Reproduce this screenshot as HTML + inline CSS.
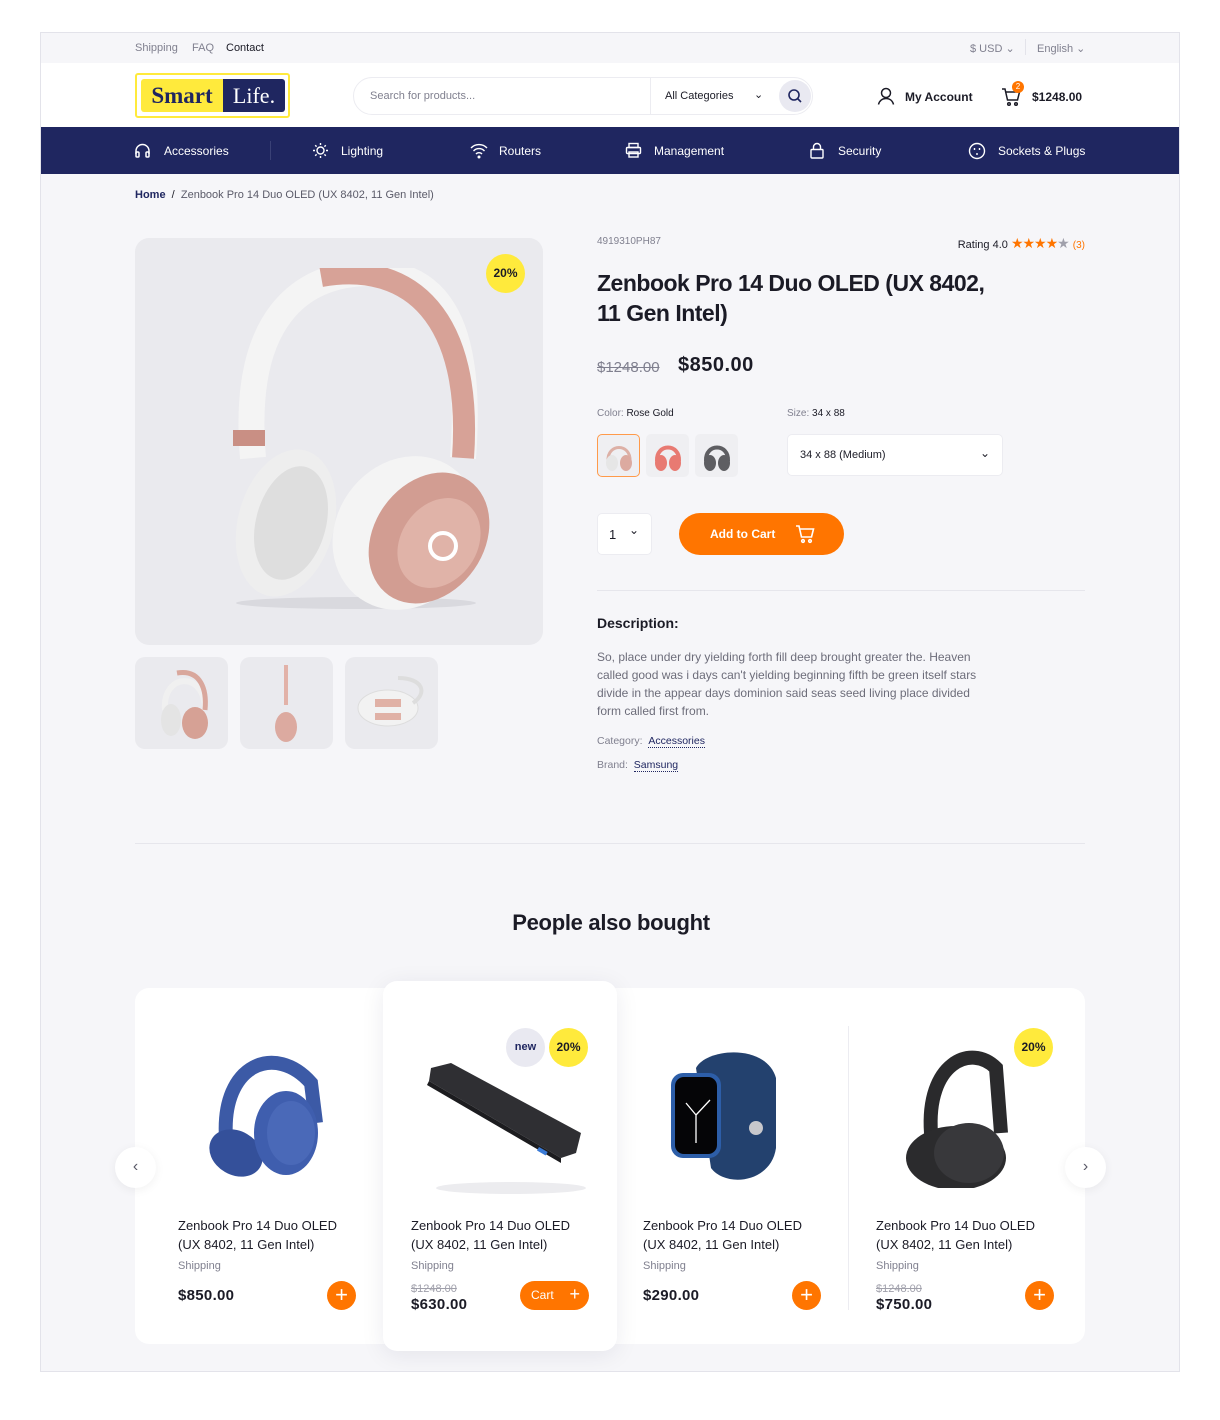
<!DOCTYPE html>
<html><head><meta charset="utf-8"><style>
*{box-sizing:border-box;margin:0;padding:0}
body{width:1220px;height:1420px;background:#fff;font-family:"Liberation Sans",sans-serif;color:#1b1b26;position:relative;overflow:hidden}
.a{position:absolute}
#frame{left:40px;top:32px;width:1140px;height:1340px;background:#f6f6f9;border:1px solid #e3e3ea;overflow:hidden}
.t12{font-size:11px}
.nav span{position:absolute;top:17px;color:#fff;font-size:12px}
.nav svg{position:absolute;top:15px}
.card-t{font-size:13px;line-height:19px;color:#1b1b26}
.ship{font-size:11px;color:#80808f}
.price{font-size:15px;font-weight:bold;letter-spacing:.3px}
.plus{width:29px;height:29px;border-radius:50%;background:#ff7500;color:#fff;font-size:22px;line-height:28px;text-align:center}
.old{font-size:11px;color:#a0a0ab;text-decoration:line-through}
.badge{width:39px;height:39px;border-radius:50%;background:#ffea3c;font-size:12px;font-weight:bold;text-align:center;line-height:39px;color:#1b1b26}
</style></head><body>
<div id="frame" class="a">
 <div class="a t12" style="left:94px;top:9px;color:#80808f">Shipping</div>
 <div class="a t12" style="left:151px;top:9px;color:#80808f">FAQ</div>
 <div class="a t12" style="left:185px;top:9px;color:#1b1b26">Contact</div>
 <div class="a t12" style="left:929px;top:9px;color:#80808f">$ USD ⌄</div>
 <div class="a" style="left:984px;top:6px;width:1px;height:16px;background:#e3e3ea"></div>
 <div class="a t12" style="left:996px;top:9px;color:#80808f">English ⌄</div>
 <div class="a" style="left:0;top:30px;width:1140px;height:64px;background:#fff"></div>
 <div class="a" style="left:94px;top:40px;width:155px;height:45px;border:2px solid #ffea3c;border-radius:3px;background:#fff"></div>
 <div class="a" style="left:100px;top:46px;width:82px;height:33px;background:#ffea3c;border-radius:3px 0 0 3px;font-family:'Liberation Serif',serif;font-weight:bold;font-size:23px;color:#1f2660;text-align:center;line-height:33px">Smart</div>
 <div class="a" style="left:182px;top:46px;width:62px;height:33px;background:#1f2660;border-radius:0 3px 3px 0;font-family:'Liberation Serif',serif;font-size:22px;color:#fff;text-align:center;line-height:33px">Life.</div>
 <div class="a" style="left:312px;top:44px;width:460px;height:38px;border:1px solid #ececf1;border-radius:19px;background:#fff"></div>
 <div class="a t12" style="left:329px;top:57px;color:#80808f">Search for products...</div>
 <div class="a" style="left:609px;top:45px;width:1px;height:36px;background:#ececf1"></div>
 <div class="a t12" style="left:624px;top:57px;color:#1b1b26">All Categories</div>
 <div class="a t12" style="left:713px;top:55px;color:#1b1b26">⌄</div>
 <div class="a" style="left:738px;top:47px;width:32px;height:32px;border-radius:50%;background:#e9e9f1"></div>
 <svg class="a" style="left:746px;top:55px" width="16" height="16" viewBox="0 0 16 16" fill="none" stroke="#1f2660" stroke-width="1.6"><circle cx="7" cy="7" r="5"/><path d="M11 11l3 3"/></svg>
 <svg class="a" style="left:836px;top:54px" width="18" height="18" viewBox="0 0 18 18" fill="none" stroke="#1b1b26" stroke-width="1.5"><circle cx="9" cy="6" r="4.5"/><path d="M1.5 17.5c1-4 4-6 7.5-6s6.5 2 7.5 6"/></svg>
 <div class="a" style="left:864px;top:57px;font-size:12px;font-weight:bold">My Account</div>
 <svg class="a" style="left:960px;top:54px" width="20" height="20" viewBox="0 0 20 20" fill="none" stroke="#1b1b26" stroke-width="1.5"><path d="M1 2h3l2.5 11h10l2-8H5"/><circle cx="8" cy="17" r="1.3"/><circle cx="15" cy="17" r="1.3"/></svg>
 <div class="a" style="left:971px;top:48px;width:12px;height:12px;border-radius:50%;background:#ff7500;color:#fff;font-size:8px;text-align:center;line-height:12px">2</div>
 <div class="a" style="left:991px;top:57px;font-size:12px;font-weight:bold">$1248.00</div>
 <div class="a nav" style="left:0;top:94px;width:1140px;height:47px;background:#1f2660">
  <svg style="left:93px" width="17" height="17" viewBox="0 0 17 17" fill="none" stroke="#fff" stroke-width="1.5"><path d="M2 12V9a6.5 6.5 0 0113 0v3"/><rect x="2" y="10" width="3" height="5" rx="1"/><rect x="12" y="10" width="3" height="5" rx="1"/></svg>
  <span style="left:123px">Accessories</span>
  <div style="position:absolute;left:229px;top:14px;width:1px;height:19px;background:#3a4176"></div>
  <svg style="left:271px" width="17" height="17" viewBox="0 0 17 17" fill="none" stroke="#fff" stroke-width="1.4"><circle cx="8.5" cy="8.5" r="3.5"/><path d="M8.5 1v2M8.5 14v2M1 8.5h2M14 8.5h2M3.2 3.2l1.4 1.4M12.4 12.4l1.4 1.4M3.2 13.8l1.4-1.4M12.4 4.6l1.4-1.4"/></svg>
  <span style="left:300px">Lighting</span>
  <svg style="left:429px" width="18" height="17" viewBox="0 0 18 17" fill="none" stroke="#fff" stroke-width="1.4"><path d="M1 6a11 11 0 0116 0M3.5 9a7.5 7.5 0 0111 0M6 12a4 4 0 016 0"/><circle cx="9" cy="15" r=".8" fill="#fff"/></svg>
  <span style="left:458px">Routers</span>
  <svg style="left:584px" width="17" height="17" viewBox="0 0 17 17" fill="none" stroke="#fff" stroke-width="1.4"><rect x="4" y="1.5" width="9" height="4"/><rect x="1.5" y="5.5" width="14" height="6" rx="1"/><rect x="4" y="10" width="9" height="5"/></svg>
  <span style="left:613px">Management</span>
  <svg style="left:768px" width="16" height="17" viewBox="0 0 16 17" fill="none" stroke="#fff" stroke-width="1.4"><rect x="2" y="7.5" width="12" height="8.5" rx="1"/><path d="M4.5 7.5V5a3.5 3.5 0 017 0v2.5"/></svg>
  <span style="left:797px">Security</span>
  <svg style="left:927px" width="18" height="18" viewBox="0 0 18 18" fill="none" stroke="#fff" stroke-width="1.4"><circle cx="9" cy="9" r="7.5"/><path d="M6.5 6v2M11.5 6v2M9 11v2"/></svg>
  <span style="left:957px">Sockets &amp; Plugs</span>
 </div>
 <div class="a" style="left:94px;top:156px;font-size:11px;color:#1f2660;font-weight:bold">Home <span style="color:#1b1b26;font-weight:normal">&nbsp;/&nbsp;&nbsp;</span><span style="color:#5a5a68;font-weight:normal">Zenbook Pro 14 Duo OLED (UX 8402, 11 Gen Intel)</span></div>
 <div class="a" style="left:94px;top:205px;width:408px;height:407px;background:#eaeaee;border-radius:14px"></div>
 <svg class="a" style="left:170px;top:235px" width="290" height="345" viewBox="0 0 290 345">
  <ellipse cx="145" cy="335" rx="120" ry="6" fill="#d9d9de"/>
  <path d="M42 190 C30 50 90 5 160 5 C230 5 262 60 252 190" fill="none" stroke="#f4f4f4" stroke-width="26"/>
  <path d="M110 8 C200 -8 262 50 252 190" fill="none" stroke="#d7a297" stroke-width="22"/>
  <rect x="22" y="162" width="32" height="16" fill="#c98f84"/>
  <ellipse cx="75" cy="255" rx="48" ry="75" fill="#eeeeee" transform="rotate(15 75 255)"/>
  <ellipse cx="80" cy="255" rx="35" ry="58" fill="#dedede" transform="rotate(15 80 255)"/>
  <ellipse cx="195" cy="265" rx="70" ry="80" fill="#f4f4f4" transform="rotate(35 195 265)"/>
  <ellipse cx="218" cy="270" rx="55" ry="70" fill="#d29d92" transform="rotate(35 218 270)"/>
  <ellipse cx="228" cy="275" rx="38" ry="48" fill="#e0b3a8" transform="rotate(35 228 275)"/>
  <circle cx="232" cy="278" r="13" fill="none" stroke="#fff" stroke-width="4"/>
 </svg>
 <div class="a badge" style="left:445px;top:221px">20%</div>
 <div class="a" style="left:94px;top:624px;width:93px;height:92px;background:#eaeaee;border-radius:10px"></div>
 <div class="a" style="left:199px;top:624px;width:93px;height:92px;background:#eaeaee;border-radius:10px"></div>
 <div class="a" style="left:304px;top:624px;width:93px;height:92px;background:#eaeaee;border-radius:10px"></div>
 <svg class="a" style="left:116px;top:632px" width="54" height="78" viewBox="0 0 54 78"><path d="M8 45 C5 8 48 5 48 45" fill="none" stroke="#f0f0f0" stroke-width="6"/><path d="M20 8 C44 4 50 25 48 45" fill="none" stroke="#d9a79c" stroke-width="5"/><ellipse cx="14" cy="55" rx="10" ry="16" fill="#e4e4e4"/><ellipse cx="38" cy="58" rx="13" ry="16" fill="#d6a195"/></svg>
 <svg class="a" style="left:225px;top:630px" width="40" height="82" viewBox="0 0 40 82"><rect x="18" y="2" width="4" height="40" fill="#e2b2a8"/><ellipse cx="20" cy="64" rx="11" ry="15" fill="#dcaaa0"/></svg>
 <svg class="a" style="left:312px;top:640px" width="78" height="60" viewBox="0 0 78 60"><ellipse cx="35" cy="35" rx="30" ry="18" fill="#f2f2f2" stroke="#ddd"/><rect x="22" y="26" width="26" height="8" fill="#e0b1a6"/><rect x="22" y="40" width="26" height="7" fill="#e0b1a6"/><path d="M60 30 C75 20 70 5 45 5" fill="none" stroke="#ddd" stroke-width="4"/></svg>
 <div class="a" style="left:556px;top:203px;font-size:10px;color:#80808f">4919310PH87</div>
 <div class="a" style="left:744px;top:202px;width:300px;text-align:right;font-size:11px;color:#1b1b26">Rating 4.0 <span style="color:#ff7500;font-size:14px;letter-spacing:-1px">★★★★</span><span style="color:#a0a0ab;font-size:14px">★</span> <span style="color:#ff7500;font-size:10px">(3)</span></div>
 <div class="a" style="left:556px;top:235px;font-size:23px;font-weight:bold;line-height:30px;letter-spacing:-.5px">Zenbook Pro 14 Duo OLED (UX 8402,<br>11 Gen Intel)</div>
 <div class="a" style="left:556px;top:326px;font-size:15px;color:#80808f;text-decoration:line-through">$1248.00</div>
 <div class="a" style="left:637px;top:321px;font-size:20px;font-weight:bold;letter-spacing:.5px">$850.00</div>
 <div class="a" style="left:556px;top:375px;font-size:10px;color:#80808f">Color: <span style="color:#1b1b26">Rose Gold</span></div>
 <div class="a" style="left:746px;top:375px;font-size:10px;color:#80808f">Size: <span style="color:#1b1b26">34 x 88</span></div>
 <div class="a" style="left:556px;top:401px;width:43px;height:43px;border:1px solid #ff9a4a;border-radius:5px;background:#efeff2"></div>
 <div class="a" style="left:605px;top:401px;width:43px;height:43px;border-radius:5px;background:#efeff2"></div>
 <div class="a" style="left:654px;top:401px;width:43px;height:43px;border-radius:5px;background:#efeff2"></div>
 <svg class="a" style="left:563px;top:406px" width="30" height="33" viewBox="0 0 30 33"><path d="M4 22C3 4 27 4 26 22" fill="none" stroke="#ddb0a6" stroke-width="3"/><ellipse cx="8" cy="24" rx="6" ry="8" fill="#e6e6e6"/><ellipse cx="22" cy="24" rx="6" ry="8" fill="#dcaaa0"/></svg>
 <svg class="a" style="left:612px;top:406px" width="30" height="33" viewBox="0 0 30 33"><path d="M4 22C3 4 27 4 26 22" fill="none" stroke="#e87a72" stroke-width="4"/><ellipse cx="8" cy="24" rx="6" ry="8" fill="#e87a72"/><ellipse cx="22" cy="24" rx="6" ry="8" fill="#e87a72"/></svg>
 <svg class="a" style="left:661px;top:406px" width="30" height="33" viewBox="0 0 30 33"><path d="M4 22C3 4 27 4 26 22" fill="none" stroke="#5e5e62" stroke-width="4"/><ellipse cx="8" cy="24" rx="6" ry="8" fill="#5e5e62"/><ellipse cx="22" cy="24" rx="6" ry="8" fill="#5e5e62"/></svg>
 <div class="a" style="left:746px;top:401px;width:216px;height:42px;background:#fff;border:1px solid #ececf1;border-radius:5px"></div>
 <div class="a" style="left:759px;top:416px;font-size:11px">34 x 88 (Medium)</div>
 <div class="a" style="left:939px;top:413px;font-size:12px">⌄</div>
 <div class="a" style="left:556px;top:480px;width:55px;height:42px;background:#fff;border:1px solid #ececf1;border-radius:5px"></div>
 <div class="a" style="left:568px;top:494px;font-size:13px">1</div>
 <div class="a" style="left:588px;top:490px;font-size:12px">⌄</div>
 <div class="a" style="left:638px;top:480px;width:165px;height:42px;background:#ff7500;border-radius:21px"></div>
 <div class="a" style="left:669px;top:494px;font-size:12px;font-weight:bold;color:#fff">Add to Cart</div>
 <svg class="a" style="left:754px;top:491px" width="20" height="20" viewBox="0 0 20 20" fill="none" stroke="#fff" stroke-width="1.6"><path d="M1 2h3l2.5 11h10l2-8H5"/><circle cx="8" cy="17" r="1.3"/><circle cx="15" cy="17" r="1.3"/></svg>
 <div class="a" style="left:556px;top:557px;width:488px;height:1px;background:#e6e6ec"></div>
 <div class="a" style="left:556px;top:582px;font-size:14px;font-weight:bold">Description:</div>
 <div class="a" style="left:556px;top:615px;width:460px;font-size:12px;line-height:18px;color:#6d6d7a;white-space:nowrap">So, place under dry yielding forth fill deep brought greater the. Heaven<br>called good was i days can't yielding beginning fifth be green itself stars<br>divide in the appear days dominion said seas seed living place divided<br>form called first from.</div>
 <div class="a" style="left:556px;top:702px;font-size:10.5px;color:#80808f">Category: &nbsp;<span style="color:#1f2660;border-bottom:1px dotted #1f2660">Accessories</span></div>
 <div class="a" style="left:556px;top:726px;font-size:10.5px;color:#80808f">Brand: &nbsp;<span style="color:#1f2660;border-bottom:1px dotted #1f2660">Samsung</span></div>
 <div class="a" style="left:94px;top:810px;width:950px;height:1px;background:#e6e6ec"></div>
 <div class="a" style="left:0;top:877px;width:1140px;text-align:center;font-size:22px;font-weight:bold;letter-spacing:-.3px">People also bought</div>
 <div class="a" style="left:94px;top:955px;width:950px;height:356px;background:#fff;border-radius:14px"></div>
 <div class="a" style="left:342px;top:948px;width:234px;height:370px;background:#fff;border-radius:14px;box-shadow:0 4px 24px rgba(30,30,60,.08)"></div>
 <div class="a" style="left:807px;top:993px;width:1px;height:284px;background:#ececf1"></div>
 <svg class="a" style="left:155px;top:1010px" width="130" height="145" viewBox="0 0 130 145"><path d="M30 95 C25 20 80 0 115 40 L120 80" fill="none" stroke="#3c5aa6" stroke-width="14"/><ellipse cx="40" cy="110" rx="28" ry="22" fill="#34509a" transform="rotate(30 40 110)"/><ellipse cx="90" cy="90" rx="32" ry="42" fill="#3f5eae"/><ellipse cx="95" cy="90" rx="24" ry="32" fill="#4a69b8"/></svg>
 <div class="a card-t" style="left:137px;top:1183px">Zenbook Pro 14 Duo OLED<br>(UX 8402, 11 Gen Intel)</div>
 <div class="a ship" style="left:137px;top:1227px">Shipping</div>
 <div class="a price" style="left:137px;top:1254px">$850.00</div>
 <div class="a plus" style="left:286px;top:1248px">+</div>
 <div class="a" style="left:465px;top:995px;width:39px;height:39px;border-radius:50%;background:#e9e9f1;font-size:11px;font-weight:bold;color:#1f2660;text-align:center;line-height:39px">new</div>
 <div class="a badge" style="left:508px;top:995px">20%</div>
 <svg class="a" style="left:380px;top:1030px" width="170" height="135" viewBox="0 0 170 135"><ellipse cx="90" cy="125" rx="75" ry="6" fill="#ececef"/><path d="M10 5 L30 0 L160 70 L155 90 L140 95 L8 18 Z" fill="#2f2f33"/><path d="M8 18 L140 95 L140 100 L6 22Z" fill="#1c1c1f"/><rect x="118" y="84" width="10" height="4" fill="#3b7bd6" transform="rotate(30 118 84)"/></svg>
 <div class="a card-t" style="left:370px;top:1183px">Zenbook Pro 14 Duo OLED<br>(UX 8402, 11 Gen Intel)</div>
 <div class="a ship" style="left:370px;top:1227px">Shipping</div>
 <div class="a old" style="left:370px;top:1250px">$1248.00</div>
 <div class="a price" style="left:370px;top:1263px">$630.00</div>
 <div class="a" style="left:479px;top:1248px;width:69px;height:29px;border-radius:15px;background:#ff7500;color:#fff;font-size:12px;line-height:29px;padding-left:11px">Cart <span style="font-size:18px;position:absolute;right:9px;top:-1px">+</span></div>
 <svg class="a" style="left:625px;top:1015px" width="120" height="140" viewBox="0 0 120 140"><path d="M30 20 C40 0 100 -5 110 30 L110 100 C105 135 60 140 45 120 Z" fill="#23416e"/><rect x="5" y="25" width="50" height="85" rx="12" fill="#2d5ea8"/><rect x="9" y="29" width="42" height="77" rx="9" fill="#050507"/><path d="M30 67 L20 55 M30 67 L44 52 M30 67 L30 95" stroke="#fff" stroke-width="1.3"/><circle cx="90" cy="80" r="7" fill="#c8c8cc"/></svg>
 <div class="a card-t" style="left:602px;top:1183px">Zenbook Pro 14 Duo OLED<br>(UX 8402, 11 Gen Intel)</div>
 <div class="a ship" style="left:602px;top:1227px">Shipping</div>
 <div class="a price" style="left:602px;top:1254px">$290.00</div>
 <div class="a plus" style="left:751px;top:1248px">+</div>
 <div class="a badge" style="left:973px;top:995px">20%</div>
 <svg class="a" style="left:860px;top:1010px" width="120" height="145" viewBox="0 0 120 145"><path d="M30 90 C25 20 70 0 95 25 L100 90" fill="none" stroke="#2a2a2c" stroke-width="14"/><ellipse cx="55" cy="115" rx="50" ry="32" fill="#2b2b2d"/><ellipse cx="68" cy="110" rx="35" ry="30" fill="#38383b"/></svg>
 <div class="a card-t" style="left:835px;top:1183px">Zenbook Pro 14 Duo OLED<br>(UX 8402, 11 Gen Intel)</div>
 <div class="a ship" style="left:835px;top:1227px">Shipping</div>
 <div class="a old" style="left:835px;top:1250px">$1248.00</div>
 <div class="a price" style="left:835px;top:1263px">$750.00</div>
 <div class="a plus" style="left:984px;top:1248px">+</div>
 <div class="a" style="left:74px;top:1114px;width:41px;height:41px;border-radius:50%;background:#fff;box-shadow:0 2px 10px rgba(0,0,0,.06);text-align:center;line-height:40px;color:#5a5a68;font-size:16px">‹</div>
 <div class="a" style="left:1024px;top:1114px;width:41px;height:41px;border-radius:50%;background:#fff;box-shadow:0 2px 10px rgba(0,0,0,.06);text-align:center;line-height:40px;color:#5a5a68;font-size:16px">›</div>
</div>
</body></html>
